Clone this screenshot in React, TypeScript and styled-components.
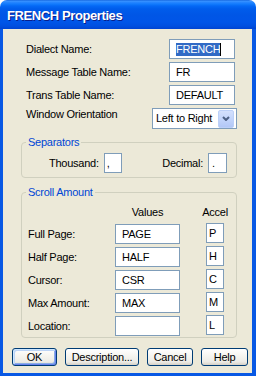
import React from "react";
import styled, { createGlobalStyle } from "styled-components";

const GlobalStyle = createGlobalStyle`
  html, body { margin: 0; padding: 0; background: #ffffff; }
  * { box-sizing: border-box; }
`;

const UI_FONT = `"Liberation Sans", Arial, sans-serif`;

const Window = styled.div`
  width: 256px;
  height: 376px;
  display: flex;
  flex-direction: column;
  font-family: ${UI_FONT};
  font-size: 11px;
  letter-spacing: -0.25px;
  line-height: 13px;
  color: #000;
`;

const TitleBar = styled.div`
  flex: none;
  height: 29px;
  display: flex;
  align-items: center;
  padding-left: 7px;
  border-radius: 7px 7px 0 0;
  background: linear-gradient(
    180deg,
    #0a5ad8 0px,
    #3c95ff 1px,
    #2a88ff 2px,
    #127bfd 4px,
    #0468f5 6px,
    #005ceb 9px,
    #0056e6 15px,
    #0055e8 22px,
    #004fe0 26px,
    #0044d2 29px
  );
`;

const Title = styled.span`
  margin-top: 2px;
  font: bold 13px ${UI_FONT};
  letter-spacing: -0.4px;
  line-height: 16px;
  color: #ffffff;
  text-shadow: 1px 1px 0 #0a1e8a;
`;

const Body = styled.div`
  flex: 1;
  display: flex;
  flex-direction: column;
  background: #ece9d8;
  border-style: solid;
  border-color: #0858e4;
  border-width: 0 4px 3px 3px;
`;

const Content = styled.div`
  display: flex;
  flex-direction: column;
  padding: 10px 15px 0 18px;
`;

const Form = styled.div`
  display: flex;
  flex-direction: column;
  gap: 3px;
  padding-left: 5px;
`;

const FormRow = styled.div<{ $top?: boolean }>`
  display: flex;
  justify-content: space-between;
  align-items: ${(p) => (p.$top ? "flex-start" : "center")};
`;

const Label = styled.span`
  white-space: nowrap;
`;

const TextBox = styled.div<{ $w: number; $pad?: number; $mr?: number }>`
  flex: none;
  width: ${(p) => p.$w}px;
  height: 20px;
  margin-right: ${(p) => p.$mr ?? 0}px;
  padding-left: ${(p) => p.$pad ?? 6}px;
  display: flex;
  align-items: center;
  border: 1px solid #7f9db9;
  background: #ffffff;
  white-space: nowrap;
  overflow: hidden;
`;

const Selected = styled.span`
  background: #316ac5;
  color: #ffffff;
  line-height: 13px;
`;

const Caret = styled.span`
  width: 1px;
  height: 13px;
  background: #000000;
`;

const Combo = styled.div`
  flex: none;
  width: 85px;
  height: 21px;
  display: flex;
  align-items: center;
  justify-content: space-between;
  padding: 0 2px 0 3px;
  border: 1px solid #7f9db9;
  background: #ffffff;
`;

const ComboButton = styled.div`
  width: 16px;
  height: 18px;
  display: flex;
  align-items: center;
  justify-content: center;
  border-radius: 2px;
  border: 1px solid #bcd0f8;
  background: linear-gradient(180deg, #d4e1fd 0%, #c3d5fb 50%, #b2c7f6 100%);
`;

const Group = styled.fieldset<{ $mt: number }>`
  margin: ${(p) => p.$mt}px 0 0 0;
  padding: 0;
  min-width: 0;
  border: 1px solid #d0d0bf;
  border-radius: 4px;
`;

const Legend = styled.legend`
  margin-left: 4px;
  padding: 0 2px;
  color: #0046d5;
  line-height: 13px;
`;

const SepRow = styled.div`
  display: flex;
  justify-content: space-between;
  padding: 4px 9px 4px 27px;
`;

const Pair = styled.div`
  display: flex;
  align-items: center;
  gap: 5px;
`;

const ScrollGrid = styled.div`
  display: grid;
  grid-template-columns: 61px 65px 18px;
  grid-template-rows: 15px repeat(5, 20px);
  column-gap: 26px;
  row-gap: 3px;
  padding: 7px 11px 1px 6px;
  align-items: center;
`;

const Header = styled.span`
  align-self: start;
  justify-self: center;
`;

const AccelBox = styled(TextBox)`
  margin-top: -2px;
`;

const ButtonRow = styled.div`
  display: flex;
  gap: 8px;
  margin-top: 10px;
  padding-left: 9px;
`;

const Button = styled.button<{ $w: number; $default?: boolean }>`
  width: ${(p) => p.$w}px;
  height: 18px;
  padding: 0;
  font: inherit;
  letter-spacing: inherit;
  color: #000000;
  border: 1px solid #003c74;
  border-radius: 3px;
  background: linear-gradient(180deg, #ffffff 0%, #f5f4ef 45%, #ecebe6 80%, #d6d0c5 100%);
  box-shadow: ${(p) =>
    p.$default
      ? "inset 1px 1px 0 #cee7ff, inset -1px -1px 0 #6982ee, inset 2px 2px 0 #bcd4f6, inset -2px -2px 0 #89ade4"
      : "none"};
`;

const Chevron = () => (
  <svg width="8" height="5" viewBox="0 0 8 5">
    <polyline points="1,1 4,4 7,1" fill="none" stroke="#4d6185" strokeWidth="2" />
  </svg>
);

const scrollRows = [
  { label: "Full Page:", value: "PAGE", accel: "P" },
  { label: "Half Page:", value: "HALF", accel: "H" },
  { label: "Cursor:", value: "CSR", accel: "C" },
  { label: "Max Amount:", value: "MAX", accel: "M" },
  { label: "Location:", value: "", accel: "L" },
];

export default function App() {
  return (
    <>
      <GlobalStyle />
      <Window>
        <TitleBar>
          <Title>FRENCH Properties</Title>
        </TitleBar>
        <Body>
          <Content>
            <Form>
              <FormRow>
                <Label>Dialect Name:</Label>
                <TextBox $w={66} $mr={2}>
                  <Selected>FRENCH</Selected>
                  <Caret />
                </TextBox>
              </FormRow>
              <FormRow>
                <Label>Message Table Name:</Label>
                <TextBox $w={66} $mr={2}>FR</TextBox>
              </FormRow>
              <FormRow>
                <Label>Trans Table Name:</Label>
                <TextBox $w={66} $mr={2}>DEFAULT</TextBox>
              </FormRow>
              <FormRow $top>
                <Label>Window Orientation</Label>
                <Combo>
                  <span>Left to Right</span>
                  <ComboButton>
                    <Chevron />
                  </ComboButton>
                </Combo>
              </FormRow>
            </Form>

            <Group $mt={7}>
              <Legend>Separators</Legend>
              <SepRow>
                <Pair>
                  <Label>Thousand:</Label>
                  <TextBox $w={18} $pad={2}>,</TextBox>
                </Pair>
                <Pair>
                  <Label>Decimal:</Label>
                  <TextBox $w={19} $pad={3}>.</TextBox>
                </Pair>
              </SepRow>
            </Group>

            <Group $mt={8}>
              <Legend>Scroll Amount</Legend>
              <ScrollGrid>
                <span />
                <Header>Values</Header>
                <Header>Accel</Header>
                {scrollRows.map((r) => (
                  <React.Fragment key={r.label}>
                    <Label>{r.label}</Label>
                    <TextBox $w={65} $pad={6}>{r.value}</TextBox>
                    <AccelBox $w={18} $pad={2}>{r.accel}</AccelBox>
                  </React.Fragment>
                ))}
              </ScrollGrid>
            </Group>
          </Content>

          <ButtonRow>
            <Button $w={45} $default>OK</Button>
            <Button $w={74}>Description...</Button>
            <Button $w={46}>Cancel</Button>
            <Button $w={47}>Help</Button>
          </ButtonRow>
        </Body>
      </Window>
    </>
  );
}
